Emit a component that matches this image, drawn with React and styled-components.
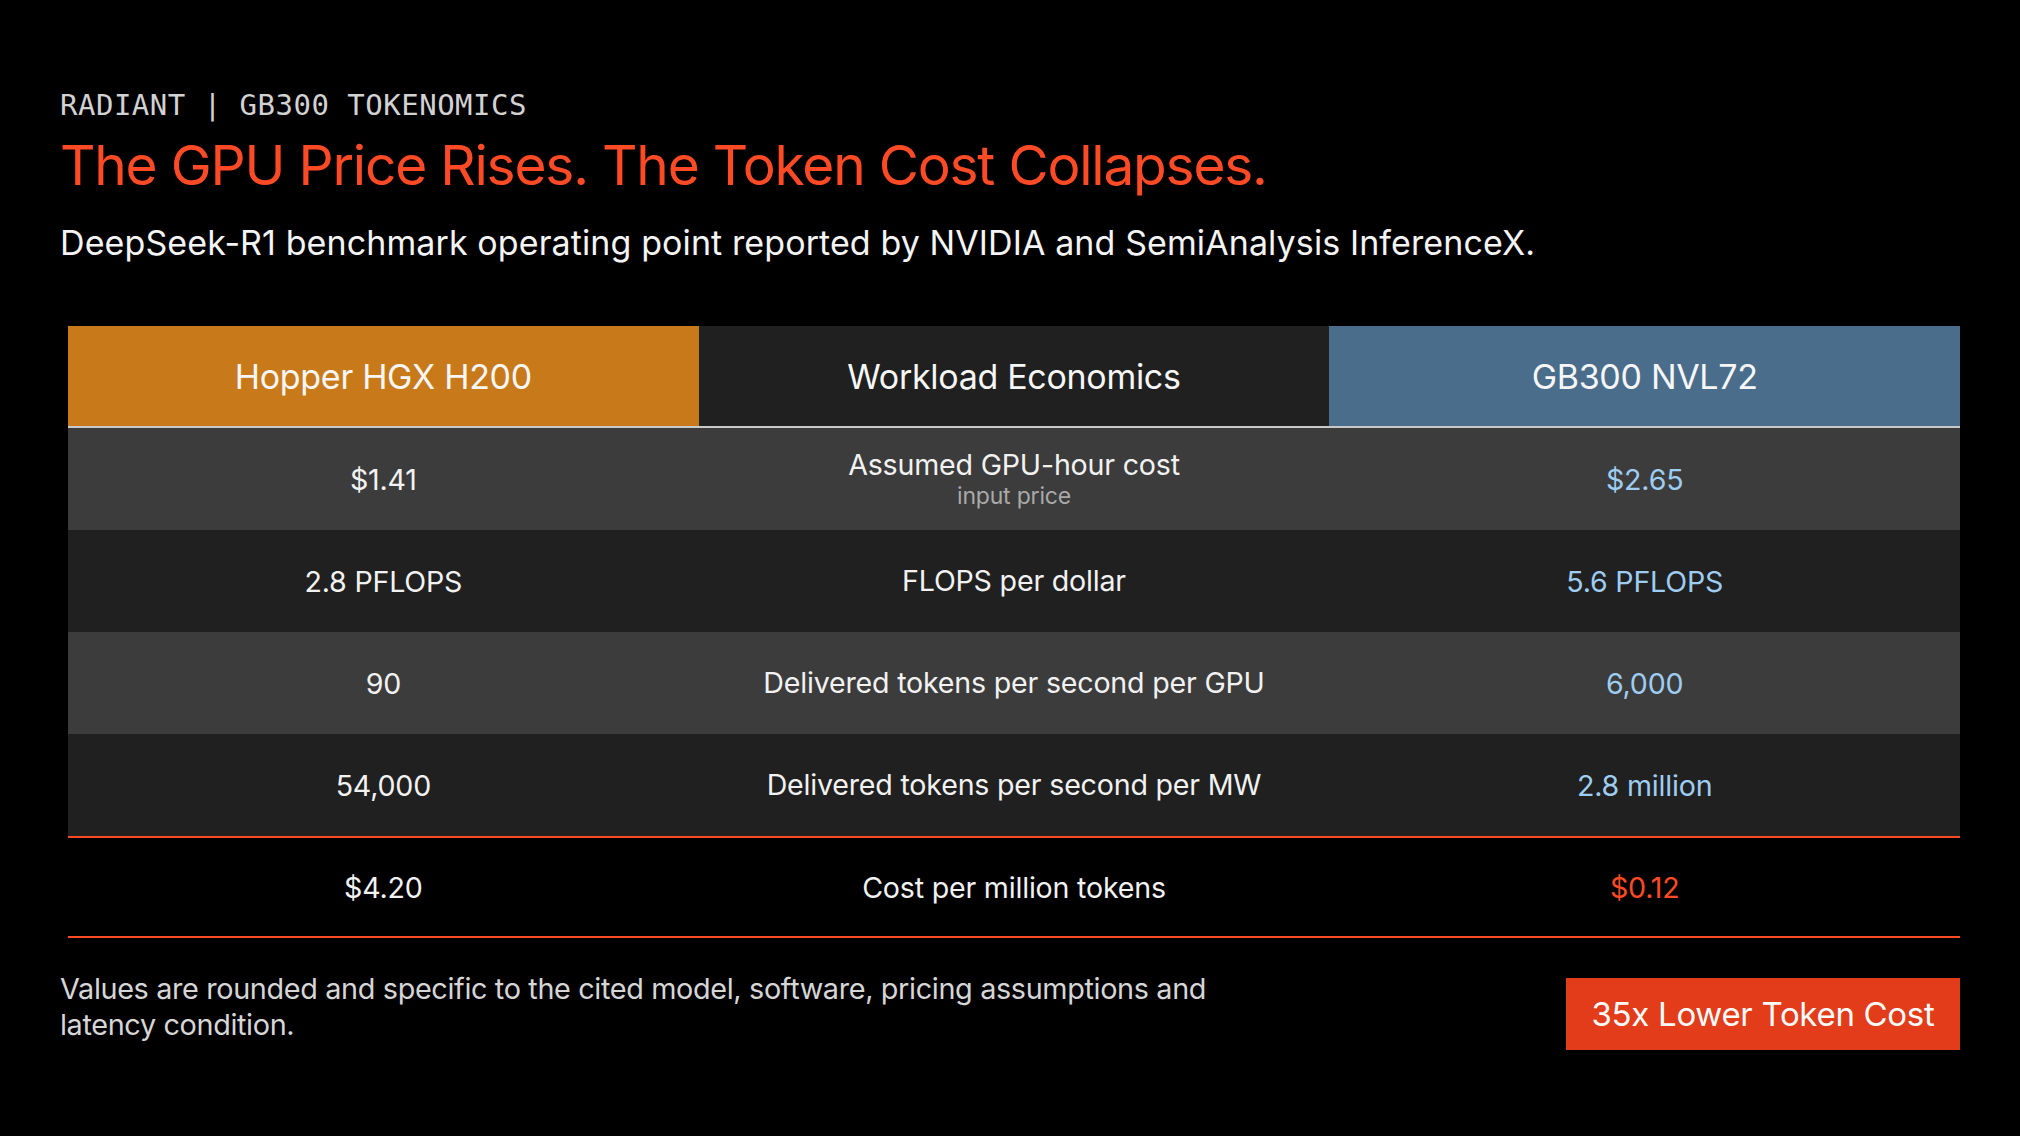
import React from "react";
import styled, { createGlobalStyle } from "styled-components";

const Global = createGlobalStyle`
  html, body { margin: 0; padding: 0; background: #000; }
  body { font-family: Inter, "Noto Sans", sans-serif; color: #f2f2f2; }
  * { box-sizing: border-box; }
`;

const Page = styled.div`
  width: 2020px;
  height: 1136px;
  background: #000;
  padding: 88px 60px 0 60px;
  display: flex;
  flex-direction: column;
`;

const Kicker = styled.div`
  font-family: "DejaVu Sans Mono", "Liberation Mono", monospace;
  font-size: 29px;
  line-height: 34px;
  color: #d2d2d2;
  letter-spacing: 0.5px;
`;

const Title = styled.h1`
  margin: 10px 0 0 0;
  font-family: Inter, "Noto Sans", sans-serif;
  font-weight: 400;
  font-size: 55px;
  line-height: 66px;
  letter-spacing: -1.2px;
  color: #ff4a26;
`;

const Subtitle = styled.p`
  margin: 24px 0 0 0;
  font-size: 34px;
  line-height: 42px;
  letter-spacing: 0.1px;
  color: #f4f4f4;
`;

const Table = styled.div`
  margin: 62px 0 0 8px;
  width: 1892px;
  display: flex;
  flex-direction: column;
`;

const HeadRow = styled.div`
  display: grid;
  grid-template-columns: repeat(3, 1fr);
  height: 102px;
  border-bottom: 2px solid #c9c9c9;
`;

const HeadCell = styled.div`
  display: flex;
  align-items: center;
  justify-content: center;
  background: ${(p) => p.$bg};
  font-size: 34px;
  letter-spacing: -0.3px;
  color: #f6f6f6;
`;

const Row = styled.div`
  display: grid;
  grid-template-columns: repeat(3, 1fr);
  height: 102px;
  background: ${(p) => p.$bg};
  ${(p) =>
    p.$total
      ? `border-top: 2px solid #ff4a26; border-bottom: 2px solid #ff4a26;`
      : ""}
`;

const Cell = styled.div`
  display: flex;
  flex-direction: column;
  align-items: center;
  justify-content: center;
  font-size: 28.6px;
  letter-spacing: -0.2px;
  color: ${(p) => p.$color || "#f2f2f2"};
`;

const Label = styled.span`
  line-height: 34px;
`;

const SubLabel = styled.span`
  font-size: 23px;
  line-height: 28px;
  color: #a9a9a9;
`;

const Footer = styled.div`
  margin-top: 33px;
  display: flex;
  justify-content: space-between;
  align-items: flex-start;
`;

const Note = styled.p`
  margin: 0;
  max-width: 1200px;
  font-size: 28.8px;
  line-height: 36px;
  letter-spacing: -0.35px;
  color: #d6d6d6;
`;

const Badge = styled.div`
  margin-top: 7px;
  width: 394px;
  height: 72px;
  background: #e23c1a;
  color: #fbfbfb;
  display: flex;
  align-items: center;
  justify-content: center;
  font-size: 33px;
  letter-spacing: -0.3px;
`;

const rows = [
  { h: "$1.41", label: "Assumed GPU-hour cost", sub: "input price", g: "$2.65", bg: "#3c3c3c" },
  { h: "2.8 PFLOPS", label: "FLOPS per dollar", g: "5.6 PFLOPS", bg: "#202020" },
  { h: "90", label: "Delivered tokens per second per GPU", g: "6,000", bg: "#3c3c3c" },
  { h: "54,000", label: "Delivered tokens per second per MW", g: "2.8 million", bg: "#202020" },
];

export default function App() {
  return (
    <>
      <Global />
      <Page>
        <Kicker>RADIANT | GB300 TOKENOMICS</Kicker>
        <Title>The GPU Price Rises. The Token Cost Collapses.</Title>
        <Subtitle>
          DeepSeek-R1 benchmark operating point reported by NVIDIA and SemiAnalysis InferenceX.
        </Subtitle>
        <Table>
          <HeadRow>
            <HeadCell $bg="#c87a1a">Hopper HGX H200</HeadCell>
            <HeadCell $bg="#202020">Workload Economics</HeadCell>
            <HeadCell $bg="#4a6d8c">GB300 NVL72</HeadCell>
          </HeadRow>
          {rows.map((r) => (
            <Row key={r.label} $bg={r.bg}>
              <Cell>{r.h}</Cell>
              <Cell>
                <Label>{r.label}</Label>
                {r.sub && <SubLabel>{r.sub}</SubLabel>}
              </Cell>
              <Cell $color="#9fcdf2">{r.g}</Cell>
            </Row>
          ))}
          <Row $bg="#000" $total>
            <Cell>$4.20</Cell>
            <Cell>Cost per million tokens</Cell>
            <Cell $color="#ff4a26">$0.12</Cell>
          </Row>
        </Table>
        <Footer>
          <Note>
            Values are rounded and specific to the cited model, software, pricing assumptions and
            latency condition.
          </Note>
          <Badge>35x Lower Token Cost</Badge>
        </Footer>
      </Page>
    </>
  );
}
